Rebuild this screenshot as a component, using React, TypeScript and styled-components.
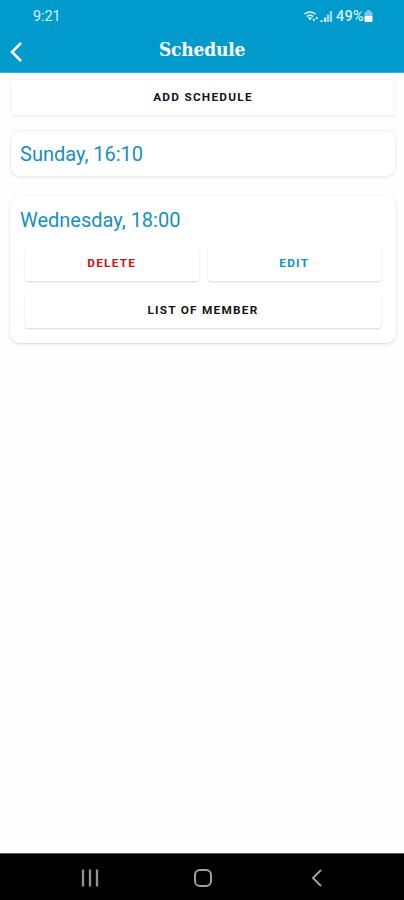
import React from "react";
import styled, { createGlobalStyle } from "styled-components";

const GlobalStyle = createGlobalStyle`
  * { box-sizing: border-box; }
  body { margin: 0; background: #fefefe; font-family: Roboto, "Liberation Sans", sans-serif; }
`;

const Screen = styled.div`
  display: flex;
  flex-direction: column;
  height: 900px;
  background: #fefefe;
  overflow: hidden;
`;

const TopArea = styled.header`
  flex: none;
  height: 73px;
  background: #019acd;
  border-bottom: 1px solid #3fabd0;
  color: #fff;
`;

const StatusBar = styled.div`
  display: flex;
  align-items: center;
  justify-content: space-between;
  height: 32px;
  padding: 1px 31px 0 33px;
  color: #d5f2fb;
  font-size: 14.5px;
  line-height: 31px;
`;

const Clock = styled.span`
  letter-spacing: -0.1px;
`;

const StatusIcons = styled.div`
  display: flex;
  align-items: center;
`;

const Percent = styled.span`
  margin-left: 2px;
  font-weight: 500;
  letter-spacing: 0.3px;
`;

const TitleBar = styled.div`
  display: grid;
  grid-template-columns: 32px 1fr 32px;
  align-items: center;
  height: 36px;
`;

const BackButton = styled.button`
  display: flex;
  padding: 3px 0 0 8px;
  border: 0;
  background: none;
  color: inherit;
`;

const Title = styled.h1`
  margin: 0;
  padding-bottom: 2px;
  text-align: center;
  font: bold 19px/34px "DejaVu Serif Condensed", "DejaVu Serif", serif;
  font-stretch: condensed;
  letter-spacing: -0.2px;
`;

const Content = styled.main`
  flex: 1;
  display: flex;
  flex-direction: column;
  padding: 6px 8px 0 10px;
`;

const Button = styled.button<{ $tone?: string; $flat?: boolean }>`
  flex: 1;
  height: ${(p) => (p.$flat ? 37 : 35)}px;
  padding: 0;
  border: 0;
  border-radius: 3px;
  background: #fff;
  color: ${(p) => p.$tone ?? "#151515"};
  font: 700 11.8px/35px Roboto, "Liberation Sans", sans-serif;
  letter-spacing: 1.25px;
  box-shadow: ${(p) =>
    p.$flat
      ? "inset 0 0 0 1px #f3f3f3, 0 1px 1px #f1f1f1"
      : "0 1px 2px rgba(0, 0, 0, 0.16)"};
`;

const AddRow = styled.div`
  display: flex;
`;

const Card = styled.section<{ $gap: number; $height: number; $raised?: boolean }>`
  height: ${(p) => p.$height}px;
  margin-top: ${(p) => p.$gap}px;
  padding: 0 15px;
  border-radius: 10px;
  background: #fff;
  box-shadow: ${(p) =>
    p.$raised
      ? "0 1px 3px rgba(0, 0, 0, 0.16)"
      : "inset 0 0 0 1px #f0f0f0, 0 1px 2px #e8e8e8"};
`;

const CardTitle = styled.h2`
  margin: 0 0 0 -5px;
  color: #168fc2;
  font-size: 20px;
  font-weight: 400;
  line-height: 48px;
`;

const ButtonRow = styled.div<{ $gap: number }>`
  display: flex;
  gap: 9px;
  margin-top: ${(p) => p.$gap}px;
`;

const NavBar = styled.nav`
  flex: none;
  display: grid;
  grid-template-columns: 18px 20px 14px;
  align-items: center;
  justify-content: start;
  column-gap: 94px;
  height: 47px;
  padding: 2px 0 0 81px;
  background: #000;
  border-top: 1px solid #555;

  svg:last-child {
    margin-left: 3px;
  }
`;

const WifiIcon = () => (
  <svg width="16" height="13" viewBox="0 0 16 13" fill="none" stroke="currentColor">
    <path d="M.5 4.2Q6 -.2 11.5 4.2M2.8 6.6Q6 3.6 9.2 6.6" strokeWidth="1.5" />
    <path d="M4 8L6 6.8L8 8L6 10.6Z" fill="currentColor" stroke="none" />
    <path d="M8.2 8.5L10.1 11.8L11.2 9.2ZM11.3 9L12.4 6.3L14.4 9Z" fill="currentColor" stroke="none" />
  </svg>
);

const SignalIcon = () => (
  <svg width="14" height="13" viewBox="0 0 14 13" fill="currentColor">
    <rect x=".5" y="10" width="2" height="2" />
    <rect x="4" y="7.5" width="2.2" height="4.5" />
    <rect x="6.8" y="4.5" width="2.4" height="7.5" opacity=".7" />
    <rect x="9.8" y="1" width="2.4" height="11" opacity=".7" />
  </svg>
);

const BatteryIcon = () => (
  <svg width="9" height="13" viewBox="0 0 9 13" fill="currentColor">
    <path d="M2.7 0H6.3V1.7H7.3Q8.5 1.7 8.5 3V6H.5V3Q.5 1.7 1.7 1.7H2.7Z" opacity=".55" />
    <path d="M.5 6H8.5V10.8Q8.5 12 7.3 12H1.7Q.5 12 .5 10.8Z" fill="#fff" />
  </svg>
);

export default function App() {
  return (
    <>
      <GlobalStyle />
      <Screen>
        <TopArea>
          <StatusBar>
            <Clock>9:21</Clock>
            <StatusIcons>
              <WifiIcon />
              <SignalIcon />
              <Percent>49%</Percent>
              <BatteryIcon />
            </StatusIcons>
          </StatusBar>
          <TitleBar>
            <BackButton aria-label="Back">
              <svg width="15" height="22" viewBox="0 0 15 22" fill="none" stroke="#fff" strokeWidth="2.6">
                <path d="M13 2L4 11L13 20" />
              </svg>
            </BackButton>
            <Title>Schedule</Title>
          </TitleBar>
        </TopArea>
        <Content>
          <AddRow>
            <Button $flat>ADD SCHEDULE</Button>
          </AddRow>
          <Card $gap={14} $height={47}>
            <CardTitle>Sunday, 16:10</CardTitle>
          </Card>
          <Card $gap={19} $height={147} $raised>
            <CardTitle>Wednesday, 18:00</CardTitle>
            <ButtonRow $gap={2}>
              <Button $tone="#c4161c">DELETE</Button>
              <Button $tone="#168fc2">EDIT</Button>
            </ButtonRow>
            <ButtonRow $gap={12}>
              <Button>LIST OF MEMBER</Button>
            </ButtonRow>
          </Card>
        </Content>
        <NavBar>
          <svg width="18" height="18" viewBox="0 0 18 18" stroke="#929292" strokeWidth="2.3">
            <path d="M2 .5V17.5M9 .5V17.5M16 .5V17.5" />
          </svg>
          <svg width="20" height="20" viewBox="0 0 20 20" fill="none" stroke="#a0a0a0" strokeWidth="2">
            <rect x="2" y="2" width="16" height="16" rx="5" />
          </svg>
          <svg width="14" height="18" viewBox="0 0 14 18" fill="none" stroke="#a0a0a0" strokeWidth="2">
            <path d="M11 1L3 9L11 17" />
          </svg>
        </NavBar>
      </Screen>
    </>
  );
}
